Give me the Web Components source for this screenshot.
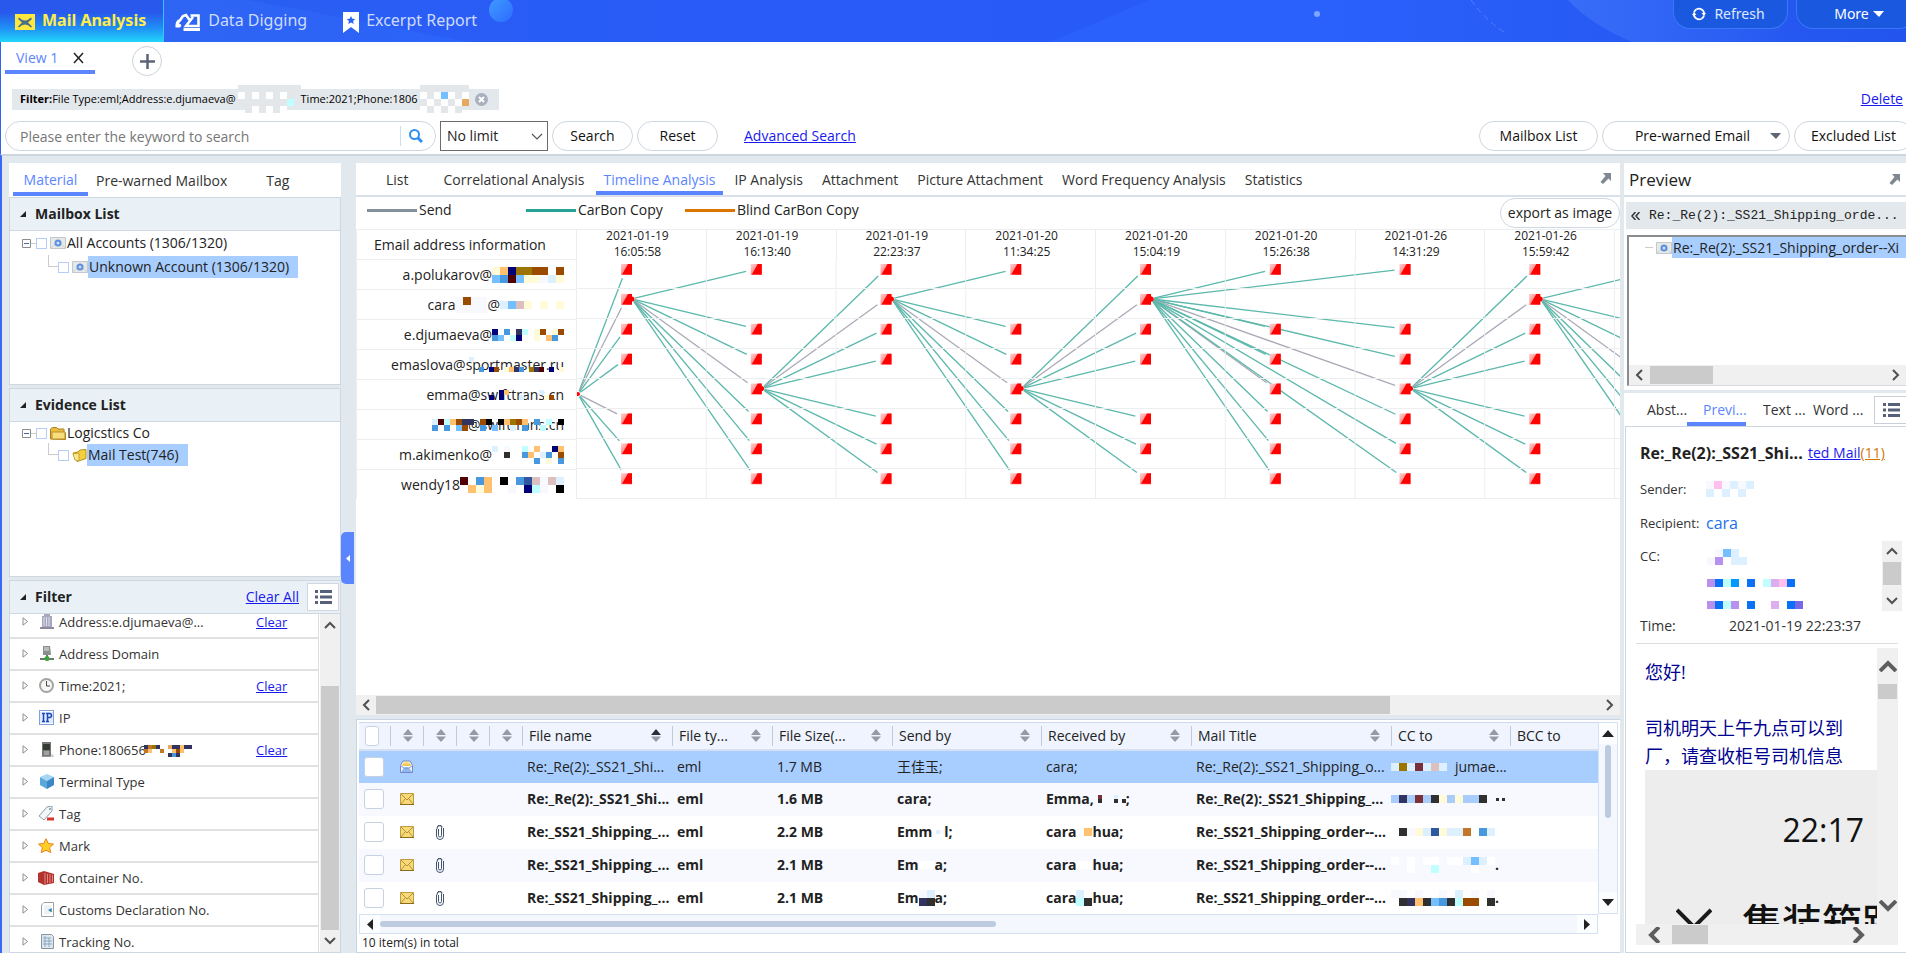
<!DOCTYPE html>
<html lang="en">
<head>
<meta charset="utf-8">
<title>Mail Analysis</title>
<style>
html,body{height:100%}
body{margin:0;font:14px/20px "Open Sans","Noto Sans CJK SC",sans-serif;color:#222;overflow:hidden;background:#fff}
</style>
</head>
<body>
<mail-app></mail-app>
<script>
const ICONS={
envelopeX:[20,16,'<path fill="#ffe83e" d="M0 0h20v16H0z"/><path d="M4 3.500q3 3 6 3t6-3l1 1.500-4 3.500 4 4-1 1q-3-3-6-3t-6 3l-1-1 4-4L3 5z" fill="#4a6f8c"/>'],
digger:[26,18,'<path d="M4.500 8L8 3l3-1 3.500 5" fill="none" stroke="#fff" stroke-width="2.600"/><path d="M3 6.500Q0 9 .5 14.500h4.500q2-1 1-3l-2-1 2-3z" fill="#fff"/><path d="M15.500 2.500h8v10.500H11l7-9" fill="none" stroke="#fff" stroke-width="2.600"/><path d="M8.500 16.500h16.500" stroke="#fff" stroke-width="3"/>'],
bookmark:[16,21,'<path d="M0 0h16v21l-8-6-8 6z" fill="#fff"/><path d="M8 4l1.300 2.700 3 .4-2.200 2 .6 2.900L8 10.600 5.300 12l.6-2.900-2.200-2 3-.4z" fill="#2c62f6"/>'],
refresh:[14,14,'<path d="M4.500 2.300A5.300 5.300 0 0 1 12.200 7M9.500 11.700A5.300 5.300 0 0 1 1.800 7" fill="none" stroke="#fff" stroke-width="1.800"/><path d="M2 5.500Q2.500 3.500 4.500 2.300M12 8.500Q11.500 10.500 9.500 11.700" fill="none" stroke="#fff" stroke-width="1.800"/><path d="M0 8l2-3 2.500 3zM14 6l-2 3-2.500-3z" fill="#fff"/>'],
caret:[11,6,'<path d="M0 0h11L6 6z" fill="currentColor"/>'],
close:[11,12,'<path d="M1 1l9 10M10 1L1 11" stroke="#222" stroke-width="1.500"/>'],
plus:[15,15,'<path d="M7.500 0v15M0 7.500h15" stroke="#5c6577" stroke-width="2.500"/>'],
chipClose:[13,13,'<circle cx="6.500" cy="6.500" r="6.500" fill="#a9b0bd"/><path d="M4 4l5 5M9 4l-5 5" stroke="#fff" stroke-width="2"/>'],
search:[14,14,'<circle cx="5.500" cy="5.500" r="4.500" fill="none" stroke="#2f8ff0" stroke-width="2"/><path d="M9 9l4 4" stroke="#2f8ff0" stroke-width="3"/>'],
chevDown:[12,7,'<path d="M1 1l5 5 5-5" fill="none" stroke="#555" stroke-width="1.200"/>'],
fold:[6,6,'<path d="M6 0v6H0z" fill="#222"/>'],
popout:[11,11,'<path d="M3 0h8v8L8.500 5.500 3 11 .5 9 5.500 3z" fill="#818892"/>'],
list:[17,14,'<path d="M0 1.500h3M0 7h3M0 12.500h3M5 1.500h12M5 7h12M5 12.500h12" stroke="#56607a" stroke-width="3"/>'],
minus:[9,9,'<path d="M.5.5h8v8h-8z" fill="#fff" stroke="#8b8b8b"/><path d="M2 4.500h5" stroke="#4466aa"/>'],
at:[16,12,'<path d="M.5.5h15v11H.5z" fill="#e6e9e6" stroke="#c3c8cc"/><path d="M0 12l6-6M16 12l-6-6" stroke="#d0d4d6"/><circle cx="8" cy="6" r="3.500" fill="#5d8fe0"/><circle cx="8" cy="6" r="1.500" fill="#cfe0fb"/>'],
folder:[16,13,'<path d="M.5 12V2l2-1.500h4L8 2h6v3l1.500 1v6.500z" fill="#e9bd42" stroke="#a87f1d"/><path d="M2 5h13v7H2z" fill="#f8de7a" stroke="#b98f2c"/>'],
folder2:[15,13,'<path d="M1 4l5-1 2-2 6-.5v9l-9 3z" fill="#f5cf3d" stroke="#b3901c"/><path d="M1 5l6-1v8l-4-1z" fill="#fbe793" stroke="#c9a530"/>'],
tri:[6,9,'<path d="M1 .8L5.500 4.500 1 8.200z" fill="#fff" stroke="#8d8d8d"/>'],
building:[14,15,'<path d="M4 0h6v2h2v11H2V2h2z" fill="#a7a7bd"/><path d="M4 3v9M6.500 3v9M9 3v9" stroke="#dfe0ee"/><path d="M0 13h14v2H0z" fill="#8a8a9a"/>'],
server:[14,15,'<path d="M3 0h7l1 9H3z" fill="#8c908c"/><path d="M4 2h5M4 4h5" stroke="#e5e8e5"/><path d="M7 9v3M0 13h14" stroke="#6d7a6d" stroke-width="2"/><circle cx="7" cy="12.500" r="2.500" fill="#3ba33b"/>'],
clock:[15,15,'<circle cx="7.500" cy="7.500" r="6.500" fill="#f6f7f5" stroke="#a0a5a0" stroke-width="2"/><path d="M7.500 3v5H11" fill="none" stroke="#444"/>'],
ip:[15,15,'<rect x=".5" y=".5" width="14" height="14" fill="#fff" stroke="#7fa0dd"/><rect x="1" y="2" width="13" height="11" fill="#dfe9fb"/><path d="M3 3.500h3M3 11.500h3M4.500 3v9M7 3.500h3.500q2 0 2 2t-2 2H9M7 11.500h3M8.500 3v9" fill="none" stroke="#1b49b8" stroke-width="1.500"/>'],
phone:[14,15,'<path d="M2 0h9v15H2z" fill="#777"/><path d="M3 2h7v6H3z" fill="#333c34"/><path d="M4 10h5M4 12h5" stroke="#ccc"/><path d="M11 13h2v2H1" stroke="#bbb" fill="none"/>'],
cube:[14,15,'<path d="M0 3l7-3 7 3-7 4z" fill="#a5d6f5"/><path d="M0 3l7 4v8l-7-4z" fill="#5aa7dc"/><path d="M14 3L7 7v8l7-4z" fill="#3c86c4"/>'],
tag:[16,15,'<path d="M1 10l8-9 5-1v5l-8 9z" fill="#f2f7f9" stroke="#8ba0ac"/><circle cx="12" cy="3" r="1" fill="#7d929e"/><path d="M9 13h7" stroke="#d9352c" stroke-width="3"/>'],
star:[16,15,'<path d="M8 .7l2.300 4.800 5.200.6-3.900 3.500 1.100 5L8 12.200l-4.700 2.400 1.100-5L.5 6.100l5.200-.6z" fill="#ffcf26" stroke="#e8811f"/>'],
container:[16,14,'<path d="M0 2l6-2 10 3v9l-10 2-6-3z" fill="#b3332f"/><path d="M7 2v11M9.500 3v9M12 3v9M14.500 4v7" stroke="#e28a83"/>'],
doc:[13,15,'<path d="M3 .5h9.500v14H.5V3z" fill="#fff" stroke="#9aa1a6"/><path d="M3 3h7v9H3z" fill="#eef2f4"/><path d="M7 8l4-2-1 4z" fill="#2c7bd1"/><path d="M9 9l2-1v2z" fill="#38a53a"/>'],
docBlue:[13,15,'<path d="M.5.500h10l2 2v12H.5z" fill="#dfe7ee" stroke="#8a949c"/><path d="M2 4h8M2 7h9M2 10h9M4 2v11M8 4v9" stroke="#8aa9c4"/>'],
up:[12,8,'<path d="M1 7l5-5 5 5" fill="none" stroke="#505050" stroke-width="2"/>'],
down:[12,8,'<path d="M1 1l5 5 5-5" fill="none" stroke="#505050" stroke-width="2"/>'],
left:[8,12,'<path d="M7 1L2 6l5 5" fill="none" stroke="#505050" stroke-width="2"/>'],
right:[8,12,'<path d="M1 1l5 5-5 5" fill="none" stroke="#505050" stroke-width="2"/>'],
bigUp:[18,12,'<path d="M1 11l8-8 8 8" fill="none" stroke="#5e5e5e" stroke-width="4"/>'],
bigDown:[18,12,'<path d="M1 1l8 8 8-8" fill="none" stroke="#5e5e5e" stroke-width="4"/>'],
bigLeft:[12,16,'<path d="M11 0L3 8l8 8" fill="none" stroke="#5e5e5e" stroke-width="4"/>'],
bigRight:[12,16,'<path d="M1 0l8 8-8 8" fill="none" stroke="#5e5e5e" stroke-width="4"/>'],
sUp:[12,7,'<path d="M0 7l6-7 6 7z" fill="#222"/>'],
sDown:[12,7,'<path d="M0 0h12L6 7z" fill="#222"/>'],
sLeft:[6,11,'<path d="M6 0v11L0 5.500z" fill="#222"/>'],
sRight:[6,11,'<path d="M0 0v11l6-5.500z" fill="#222"/>'],
sort:[10,13,'<path d="M5 0l5 6H0zM5 13l5-5.500H0z" fill="#959ba6"/>'],
sortAsc:[10,13,'<path d="M5 0l5 6H0z" fill="#2a2f3c"/><path d="M5 13l5-5.500H0z" fill="#959ba6"/>'],
openMail:[13,13,'<path d="M.5 5.500L3 1h7l2.500 4.500v7H.5z" fill="#f2f6fd" stroke="#7486c8"/><path d="M3 3.500Q6.500-1 10 3.500l1 2.500H2z" fill="#f3c64c"/><path d="M3.500 3h6" stroke="#fff3c0"/><path d="M1 12l3.500-5h4l3.500 5z" fill="#8fbaf0"/><path d="M1 6l3.500 2.500h4L12 6" fill="none" stroke="#8b9ad2"/>'],
mail:[14,12,'<path d="M.5.500h13v11H.5z" fill="#f6da77" stroke="#c09c42"/><path d="M1 1l6 6 6-6M1 11l4-5M13 11L9 6" fill="none" stroke="#b9913a"/><path d="M0 11.500h14" stroke="#8c6a1c"/>'],
clip:[8,15,'<path d="M2.500 4v6.500a1.500 1.500 0 0 0 3 0V2.500a2 2 0 0 0-4-.5M.5 4v7a3.500 3.500 0 0 0 7 0V3M1 4a3 3 0 0 1 5.500-2" fill="none" stroke="#44546e"/>'],
collapse:[4,7,'<path d="M4 0v7L0 3.500z" fill="#fff"/>'],
bigChev:[36,20,'<path d="M1 2l17 17L35 2" fill="none" stroke="#1a1a1a" stroke-width="4"/>'],
guillemet:[9,8,'<path d="M4.500 0L1 4l3.500 4M8.500 0L5 4l3.500 4" fill="none" stroke="#333" stroke-width="1.500"/>']
};
const ic=(n)=>{const [w,h,p]=ICONS[n];return `<svg class="ic" aria-hidden="true" width="${w}" height="${h}" viewBox="0 0 ${w} ${h}">${p}</svg>`};
const BASE=`*{box-sizing:border-box}svg.ic{display:block;flex:none}button,input,select{font:inherit;color:inherit;margin:0}a{color:#1a1aee}button{cursor:pointer;padding:0;background:none;border:0}`;
function define(name,css,html){
  customElements.define(name,class extends HTMLElement{
    connectedCallback(){
      if(this.shadowRoot)return;
      const r=this.attachShadow({mode:'open'});
      const t=document.createElement('template');
      t.innerHTML=`<style>${BASE}${css}</style>${typeof html==='function'?html(this):html}`;
      r.append(t.content.cloneNode(true));
    }
  });
}

/* Block of coloured pixels laid over private data; one letter per cell, rows split by "/". */
const PAL={k:'#000',K:'#303030',n:'#000078',N:'#33335f',b:'#9b4b00',o:'#ffc070',O:'#e8a860',l:'#73bfff',L:'#dcf0ff',c:'#bfffff',y:'#fffbd8',s:'#4898df',t:'#9b7500',m:'#500000',M:'#7a3038',p:'#ffc0f0',v:'#b890ee',B:'#0a70f5',u:'#dcaeee',g:'#e3e7ea',w:'#ffffff',W:'#f7f9ff',r:'#dcc0c0',q:'#c07828',d:'#3058a0',i:'#7868e8',S:'#009aff',a:'#a8cdfd'};
define('pixel-mosaic',`:host{display:block;flex:none}svg{display:block}`,el=>{
  const s=+(el.getAttribute('size')||8),rows=el.getAttribute('cells').split('/');
  const w=rows[0].length*s,h=rows.length*s;let p='';
  rows.forEach((r,y)=>[...r].forEach((ch,x)=>{if(PAL[ch])p+=`<rect x="${x*s}" y="${y*s}" width="${s}" height="${s}" fill="${PAL[ch]}"/>`}));
  return `<svg width="${w}" height="${h}" aria-hidden="true">${p}</svg>`;
});

define('scroll-bar',`:host{display:flex;background:#f0f0f0;flex:none}
:host([vertical]){flex-direction:column}
.arrow{display:flex;align-items:center;justify-content:center;flex:none;width:var(--arrow,20px)}
:host([vertical]) .arrow{width:auto;height:var(--arrow,20px)}
.track{flex:1;display:flex;min-width:0;min-height:0;align-items:stretch}
:host([vertical]) .track{flex-direction:column}
.thumb{background:#cbcbcb;margin:1px 0}
:host([vertical]) .thumb{margin:0 1px}
:host([soft]){background:#f4f8fe;border:1px solid #d5e2f3}
:host([soft]) .arrow{background:#fbfdff}
:host([soft]) .thumb{background:#bccbe0;border-radius:3px;margin:6px 0}
:host([soft][vertical]) .thumb{margin:0 6px}`,el=>{
  const v=el.hasAttribute('vertical'),[a,b,c]=el.getAttribute('parts').split(' ');
  const k=el.hasAttribute('soft')?['sUp','sDown','sLeft','sRight']:el.hasAttribute('big')?['bigUp','bigDown','bigLeft','bigRight']:['up','down','left','right'];
  return `<span class="arrow">${ic(v?k[0]:k[2])}</span><span class="track"><span style="flex:${a}"></span><span class="thumb" style="flex:${b}"></span><span style="flex:${c}"></span></span><span class="arrow">${ic(v?k[1]:k[3])}</span>`;
});

define('app-header',`:host{display:flex;position:relative;height:42px;flex:none;background:linear-gradient(90deg,#2f66f0,#2b62fb 30%,#2a60fb 70%,#2354ee);color:#cfdcff;font-family:"Noto Sans",sans-serif;font-size:16px;overflow:hidden}
.deco{position:absolute;inset:0;width:100%;height:100%}
nav{display:flex;position:relative;flex:1}
nav a{display:flex;align-items:center;gap:7px;text-decoration:none;color:#cfdbff;padding:0 36px 2px 0;height:42px}
nav a.on{background:linear-gradient(180deg,#2859ec 30%,#1f8cf5 65%,#22d6fb);color:#ffee4a;font-weight:bold;padding:0 17px 2px 15px;margin-right:11px;border-right:1px solid #35c8f8}
nav a svg{position:relative;top:2px}
.right{display:flex;gap:8px;position:relative;font-size:14px;margin-right:-10px}
.right button{height:29px;border:1px solid #3a78f5;border-top:0;border-radius:0 0 17px 17px;background:#1b58e0;color:#dfe8ff;display:flex;align-items:center;justify-content:center;gap:8px}
.right button:first-child{width:115px;padding-right:4px}.right button:last-child{width:120px;gap:4px;padding-left:6px;color:#fff}`,
`<svg class="deco" preserveAspectRatio="none" viewBox="0 0 1906 42" aria-hidden="true"><defs><linearGradient id="g" x1="0" y1="0" x2="1" y2="1"><stop offset="0" stop-color="#3f9bff"/><stop offset="1" stop-color="#2d6bff"/></linearGradient><linearGradient id="h"><stop offset="0" stop-color="#4378f8"/><stop offset="1" stop-color="#4378f8" stop-opacity="0"/></linearGradient></defs>
<path d="M250 0h900l-100 42H470z" fill="#1f4cec" opacity=".25"/><circle cx="501" cy="10" r="12" fill="url(#g)"/><circle cx="1317" cy="14" r="3" fill="#7ea5ff"/><path d="M1471 0q14 20 36 34" fill="none" stroke="#4f80ff" stroke-dasharray="6 4"/><path d="M1568 0q22 24 64 42h180L1780 0z" fill="url(#h)" opacity=".6"/></svg>
<nav><a class="on" href="#mail">${ic('envelopeX')}Mail Analysis</a><a href="#dig">${ic('digger')}Data Digging</a><a href="#report">${ic('bookmark')}Excerpt Report</a></nav>
<div class="right"><button>${ic('refresh')}Refresh</button><button>More ${ic('caret')}</button></div>`);

define('view-bar',`:host{display:flex;align-items:flex-start;height:46px;padding:4px 0 0 5px;flex:none}
.tab{display:flex;align-items:center;gap:15px;width:90px;height:28px;padding-left:11px;border-bottom:4px solid #5b85ff;color:#5b85ff;white-space:nowrap}
.add{width:30px;height:30px;margin-left:37px;border:1px solid #ccd2dc;border-radius:15px;display:flex;align-items:center;justify-content:center}`,
`<div class="tab">View 1<button aria-label="Close view">${ic('close')}</button></div><button class="add" aria-label="Add view">${ic('plus')}</button>`);

define('filter-bar',`:host{display:flex;align-items:center;justify-content:space-between;height:22px;padding:0 3px 0 12px;flex:none}
.chip{display:flex;align-items:center;height:21px;padding:0 11px 0 8px;background:#e3e8ec;font-size:11px;color:#000}
.chip pixel-mosaic{margin:-6px 0 -6px 2px}.chip button{margin-left:6px}`,
`<div class="chip"><b>Filter:</b>File Type:eml;Address:e.djumaeva@<pixel-mosaic size="7" cells="ggggggggg/wgwgwgwg/gggggggc/.gwgwgw."></pixel-mosaic>Time:2021;Phone:1806<pixel-mosaic size="7" cells="ggggggg/wgwlwgw/gwgwgwO/wgwgwg."></pixel-mosaic><button aria-label="Remove filter">${ic('chipClose')}</button></div><a href="#delete">Delete</a>`);

define('search-bar',`:host{display:flex;align-items:center;height:44px;padding:8px 0 0 5px;flex:none;overflow:hidden}
.box{display:flex;align-items:center;width:431px;height:30px;border:1px solid #cfd6e0;border-radius:15px;background:#fff}
.box input{flex:1;min-width:0;border:0;outline:0;background:none;padding:0 14px;height:28px}
.box input::placeholder{color:#777}
.box button{height:20px;width:35px;border-left:1px solid #c7e0f8;display:flex;align-items:center;padding-left:8px}
.sel{display:grid;width:108px;height:30px;margin:0 4px}
.sel>*{grid-area:1/1}.sel select{appearance:none;border:1px solid #6c6c6c;background:#fff;padding:0 6px}.sel svg{justify-self:end;align-self:center;margin-right:5px;pointer-events:none}
.pill{height:30px;border:1px solid #cfd6e0;border-radius:15px;background:#fff;margin-right:4px;display:flex;align-items:center;justify-content:center;color:#111}
.sm{width:81px}.md{width:119px}.lg{width:188px;gap:20px;padding-left:24px;color:#111}.lg svg{color:#5d6672}
.adv{margin-left:22px;flex:1}.end{margin-right:-7px}`,
`<div class="box"><input aria-label="Keyword" placeholder="Please enter the keyword to search"><button aria-label="Search keyword">${ic('search')}</button></div>
<label class="sel"><select aria-label="Limit"><option>No limit</option></select>${ic('chevDown')}</label>
<button class="pill sm">Search</button><button class="pill sm">Reset</button><a class="adv" href="#advanced">Advanced Search</a>
<button class="pill md">Mailbox List</button><button class="pill lg">Pre-warned Email${ic('caret')}</button><button class="pill md end">Excluded List</button>`);

define('side-panel',`:host{display:block;background:#fff;border:1px solid #cfd8e2;overflow:hidden}
header{display:flex;align-items:center;gap:9px;height:33px;padding:0 1px 0 10px;background:#e9f1f7;border-bottom:1px solid #cfd8e2;font-weight:bold}
header h2{font-size:14px;margin:0;flex:1}header ::slotted(*){font-weight:normal}`,
el=>`<header>${ic('fold')}<h2>${el.getAttribute('label')}</h2><slot name="tools"></slot></header><slot></slot>`);

define('tree-row',`:host{display:flex;align-items:center;height:24px;padding-left:12px;white-space:nowrap}
:host([child]){padding-left:38px}
.line{width:10px;height:12px;border-left:1px solid #ccc;border-bottom:1px solid #ccc;margin-bottom:12px}
.dash{width:5px;border-top:1px solid #ccc}
input{appearance:none;width:11px;height:11px;border:1px solid #b5cdf7;background:#fff;margin-right:3px}
label{display:flex;align-items:center}
.txt{padding:0 3px 0 1px;line-height:22px}
:host([child]) .txt{background:#a8ceff;padding-right:9px}`,
el=>`${el.hasAttribute('child')?'<span class="line"></span>':ic('minus')+'<span class="dash"></span>'}<label><input type="checkbox">${ic(el.getAttribute('icon'))}<span class="txt"><slot></slot></span></label>`);

define('filter-list',`:host{display:flex;height:calc(100% - 33px);overflow:hidden}
ul{list-style:none;margin:-7px 0 0;padding:0;flex:1;font-size:13px;color:#333}
li{display:flex;align-items:center;height:32px;border-bottom:2px solid #dfe1e3;border-right:1px solid #dcdfe2;padding-left:12px}
.i{width:31px;display:flex;justify-content:flex-end;padding-right:5px}
.n{flex:1;display:flex;align-items:center;white-space:nowrap}.n pixel-mosaic{margin:2px 0 0 -2px}
li a{width:62px}
scroll-bar{width:20px;--arrow:22px;margin-left:1px}`,()=>{
  const rows=[['building','Address:e.djumaeva@...',1],['server','Address Domain'],['clock','Time:2021;',1],['ip','IP'],['phone','Phone:180656<pixel-mosaic size="4" cells="NqtN..ONNoNN/qow.qw.obo../......NsN..."></pixel-mosaic>',1],['cube','Terminal Type'],['tag','Tag'],['star','Mark'],['container','Container No.'],['doc','Customs Declaration No.'],['docBlue','Tracking No.']];
  return `<ul>${rows.map(([i,n,c])=>`<li>${ic('tri')}<span class="i">${ic(i)}</span><span class="n">${n}</span>${c?'<a href="#clear">Clear</a>':''}</li>`).join('')}</ul><scroll-bar vertical parts="51 248 0"></scroll-bar>`;
});

define('left-pane',`:host{display:flex;flex-direction:column;gap:3px;min-height:0}
nav{display:flex;align-items:flex-end;height:34px;background:#fff;margin-bottom:-3px;padding-left:4px;flex:none}
nav a{color:#333;text-decoration:none;height:26px;text-align:center}
nav a.on{width:75px;color:#5b85ff;border-bottom:4px solid #5b85ff;margin-bottom:1px}
nav a.b{padding:0 8px;margin-right:31px}
side-panel{flex:188 1 0;min-height:0}.f{flex:375 1 0}
.ev tree-row{height:22px}
.t{display:flex;align-items:center;gap:8px}
.t button{width:32px;height:28px;border:1px solid #cfd8e2;background:#fff;display:flex;align-items:center;justify-content:center}`,
`<nav><a class="on" href="#material">Material</a><a class="b" href="#prewarned">Pre-warned Mailbox</a><a href="#tag">Tag</a></nav>
<side-panel label="Mailbox List"><tree-row icon="at">All Accounts (1306/1320)</tree-row><tree-row child icon="at">Unknown Account (1306/1320)</tree-row></side-panel>
<side-panel class="ev" label="Evidence List"><tree-row icon="folder">Logicstics Co</tree-row><tree-row child icon="folder2">Mail Test(746)</tree-row></side-panel>
<side-panel class="f" label="Filter"><div class="t" slot="tools"><a href="#clear-all">Clear All</a><button aria-label="List options">${ic('list')}</button></div><filter-list></filter-list></side-panel>`);

define('timeline-chart',`:host{display:grid;grid-template-columns:221px 1fr;flex:none;height:270px;grid-template-rows:30px 240px;font-size:14px;color:#222;overflow:hidden}
.corner,.dates,.names{border-top:1px solid #eceef0}
.corner,.names{border-left:1px solid #eceef0;border-right:1px solid #eceef0}
.corner{display:flex;align-items:center;padding-left:17px}
.dates{display:grid;grid-template-columns:repeat(8,1fr);padding-right:5px;font-size:12px;line-height:16px}
.dates div{text-align:center;padding-right:8px;border-right:1px solid #eceef0;height:32px;margin-top:-2px}
.names div{display:flex;align-items:center;justify-content:flex-end;height:30px;padding-right:12px;border-bottom:1px solid #eceef0;white-space:nowrap}
.over{display:grid;justify-items:end;align-items:center}.over>*{grid-area:1/1}
svg{width:100%;height:240px;display:block}`,()=>{
  const P=129.75,X=49,ny=r=>10+30*r-r*.1,nx=c=>X+P*(c-1);
  const nodes={1:[0,1,2,3,5,6,7],2:[0,2,3,4,5,6,7],3:[0,1,2,3,5,6,7],4:[0,2,3,4,5,6,7],5:[0,1,2,3,5,6,7],6:[0,2,3,4,5,6,7],7:[0,2,3,4,5,6,7],8:[0,1,2,3,5,6,7]};
  const fans=[[1,1,2,4],[2,4,3,1],[3,1,4,4],[4,4,5,1],[5,1,6,4],[5,1,7,4],[7,4,8,1],[8,1,9,4]];
  let s='';
  const edge=(x1,y1,c,r,grey,st=3)=>{const x2=nx(c),y2=ny(r),dx=x2-x1,dy=y2-y1,l=Math.hypot(dx,dy),ux=dx/l,uy=dy/l;
    s+=`<path d="M${x1+ux*st} ${y1+uy*st}L${x2-ux*10} ${y2-uy*10}" stroke="${grey?'#a9aab6':'#5cb8ab'}" stroke-width="1.300"/>`};
  nodes[1].forEach(r=>edge(1,135,1,r,r==1||r==5));
  fans.forEach(([c,r,c2,g])=>{(nodes[c2]||[0,2,3,4,5,6,7]).forEach(t=>edge(nx(c)+6,ny(r),c2,t,t==g))});
  let grid='';
  for(let i=1;i<9;i++){grid+=`<path d="M0 ${i*30-.5}H1043M${i*P-.5} 0V240"/>`}
  let n='';
  for(const c in nodes)for(const r of nodes[c]){const x=nx(c),y=ny(r);n+=`<rect x="${x-5}" y="${y-5}" width="11" height="11" fill="url(#nd)"/><path d="M${x-4} ${y+5.500}L${x+2} ${y-5}h4v10.500z" fill="#f00"/>`}
  fans.forEach(([c,r])=>n+=`<circle cx="${nx(c)+6}" cy="${ny(r)}" r="2.500" fill="#f00"/>`);
  const D=['2021-01-19 16:05:58','2021-01-19 16:13:40','2021-01-19 22:23:37','2021-01-20 11:34:25','2021-01-20 15:04:19','2021-01-20 15:26:38','2021-01-26 14:31:29','2021-01-26 15:59:42'];
  return `<div class="corner">Email address information</div><div class="dates">${D.map(d=>`<div>${d.replace(' ','<br>')}</div>`).join('')}</div>
  <div class="names"><div>a.polukarov@<pixel-mosaic cells="yonttbbwb/lsmlyyWLy"></pixel-mosaic></div>
  <div>cara<pixel-mosaic cells="WbWW/WWWW"></pixel-mosaic>@<pixel-mosaic cells="Llrywywy"></pixel-mosaic></div>
  <div>e.djumaeva@<pixel-mosaic size="6" cells="n.s.Nc.yb.yb/sl.cn..y.os."></pixel-mosaic></div>
  <div><span class="over"><span>emaslova@sportmaster.ru</span><pixel-mosaic size="5" cells="L................../......................../..s.nb.yoNs.tNm.n.y"></pixel-mosaic></span></div>
  <div><span class="over"><span>emma@swifttrans.cn</span><pixel-mosaic size="5" cells="....no......L..../..n.n...L....yb."></pixel-mosaic></span></div>
  <div><pixel-mosaic size="6" cells="LmcobN/s.s.lb"></pixel-mosaic><span class="over"><span>@swifttrans.cn</span><pixel-mosaic size="6" cells="N.bk.kotbo.s.c.k/..s.l..L.s..c..."></pixel-mosaic></span></div>
  <div>m.akimenko@<pixel-mosaic size="6" cells="L.W..c.o..no/..K..so.Ls.b/.......s.y.s"></pixel-mosaic></div>
  <div>wendy18<pixel-mosaic cells="mwsowkwsdrWrL/.oyow.WwncW.k"></pixel-mosaic></div></div>
  <svg viewBox="0 0 1043 240" preserveAspectRatio="none" role="img" aria-label="Mail timeline"><defs><linearGradient id="nd" x1="0" y1="0" x2="1" y2="1"><stop offset="0" stop-color="#ffd0d0"/><stop offset="1" stop-color="#ff5050"/></linearGradient></defs>
  <g fill="none">${s}</g><g stroke="#eceef0">${grid}</g>${n}<circle cx="1" cy="135" r="2" fill="#f00"/></svg>`;
});

define('analysis-pane',`:host{display:flex;flex-direction:column;background:#fff;min-height:0;flex:1;overflow:hidden}
nav{display:flex;align-items:flex-end;height:34px;border-bottom:2px solid #d9e0e9;padding:0 19px 0 30px;flex:none}
nav a{color:#333;text-decoration:none;height:25px;white-space:nowrap;margin-right:19px}
nav a.on{color:#5b85ff;border-bottom:4px solid #5b85ff;padding:0 8px;margin:0 11px 0 -8px}
nav a.l{margin-right:35px}nav .sp{flex:1}nav button{margin-bottom:11px;margin-right:-10px}
.legend{display:flex;align-items:center;height:32px;padding-left:11px;flex:none}
.k{display:flex;align-items:center;gap:2px;width:159px;white-space:nowrap;padding-bottom:6px}
.k i{width:50px;height:3px;background:var(--c)}
.legend .k.w{width:175px}
.legend button{height:30px;width:120px;border:1px solid #cfd6e4;border-radius:15px;background:#fff;margin-left:auto}
.blank{flex:1}scroll-bar{height:20px}`,
`<nav><a class="l" href="#list">List</a><a href="#corr">Correlational Analysis</a><a class="on" href="#timeline">Timeline Analysis</a><a href="#ip">IP Analysis</a><a href="#att">Attachment</a><a href="#pic">Picture Attachment</a><a href="#word">Word Frequency Analysis</a><a href="#stat">Statistics</a><span class="sp"></span><button aria-label="Pop out">${ic('popout')}</button></nav>
<div class="legend"><span class="k" style="--c:#84909b"><i></i>Send</span><span class="k" style="--c:#26a393"><i></i>CarBon Copy</span><span class="k w" style="--c:#dc7400"><i></i>Blind CarBon Copy</span><button>export as image</button></div>
<timeline-chart></timeline-chart><div class="blank"></div><scroll-bar parts="0 1012 210"></scroll-bar>`);

define('mail-grid',`:host{display:grid;grid-template-columns:1fr 20px;grid-template-rows:192px 20px 18px;background:#fff;border:1px solid #c9d5e3;border-right:0;padding:2px 2px 0;flex:none;overflow:hidden}
.wrap{overflow:hidden}
table{border-collapse:collapse;table-layout:fixed;width:100%;color:#222}
th{height:27px;padding:0;background:#eff4fe;border-top:1px solid #cddaee;border-bottom:2px solid #d5e0f0;text-align:left;font-weight:normal}
.h{display:flex;align-items:center;justify-content:space-between;height:20px;border-left:1px solid #c3cad5;padding:0 11px 0 6px;white-space:nowrap}
th:first-child .h{border:0}.h.c{padding-right:10px;justify-content:flex-end}
td{height:33px;padding:0 0 0 5px;white-space:nowrap;font-weight:bold;line-height:20px}
tr.sel td{background:#a8ceff;font-weight:normal}
tr.alt td{background:#f7f9ff}
input{appearance:none;width:20px;height:20px;border:1px solid #c6d2e2;border-radius:3px;background:#fff;display:block}
.f{display:flex;align-items:center}
.f.cc{margin-left:-5px}
td .ic{margin:0 auto}td.i{padding:0}
.foot{grid-column:1/3;font-size:12px;line-height:18px;padding-left:3px}
scroll-bar[vertical]{--arrow:21px}`,()=>{
  const cols=[31,33,33,33,33,150,100,120,149,150,200,119,0];
  const hd=['File name','File ty...','File Size(...','Send by','Received by','Mail Title','CC to','BCC to'];
  const m=(c,s)=>`<pixel-mosaic${s?` size="${s}"`:''} cells="${c}"></pixel-mosaic>`;
  const R=[['Re:_Re(2):_SS21_Shi...','1.7 MB','王佳玉;','cara;','Re:_Re(2):_SS21_Shipping_o...',m('LtLMLrLa')+'jumae...'],
  ['Re:_Re(2):_SS21_Shi...','1.6 MB','cara;','Emma,'+m('.M...L../.K.W.K.K',4)+';','Re:_Re(2):_SS21_Shipping_...',m('aNaMaKyayaaK')+m('...K.K',3)],
  ['Re:_SS21_Shipping_...','2.2 MB','Emm'+m('wLW',4)+'l;','cara'+m('wo')+'hua;','Re:_SS21_Shipping_order--...',m('wKWyLdyLLqwsL')],
  ['Re:_SS21_Shipping_...','2.1 MB','Em'+m('ww')+'a;','cara'+m('ww')+'hua;','Re:_SS21_Shipping_order--...',m('wWwWwwWwwLlLw/..w..c.W..w..')+'.'],
  ['Re:_SS21_Shipping_...','2.1 MB','Em'+m('WL/NK')+'a;','cara'+m('Lw/cK')+'hua;','Re:_SS21_Shipping_order--...',m('WWwWwwWwLwWwW/.KNoKlsKcbbwK')+'.']];
  return `<div class="wrap"><table><colgroup>${cols.map(w=>`<col${w?` style="width:${w}px"`:''}>`).join('')}</colgroup><thead><tr><th><div class="h"><input type="checkbox" aria-label="Select all"></div></th>${`<th><div class="h c">${ic('sort')}</div></th>`.repeat(4)}${hd.map((h,i)=>`<th><div class="h">${h}${i==7?'':ic(i?'sort':'sortAsc')}</div></th>`).join('')}</tr></thead><tbody>${R.map((r,i)=>`<tr class="${i?i%2?'alt':'':'sel'}"><td><input type="checkbox" aria-label="Select row"></td><td class="i">${ic(i?'mail':'openMail')}</td><td class="i">${i>1?ic('clip'):''}</td><td></td><td></td><td>${r[0]}</td><td>eml</td><td>${r[1]}</td>${r.slice(2).map((c,j)=>`<td><div class="f${j==3?' cc':''}">${c}</div></td>`).join('')}<td></td></tr>`).join('')}</tbody></table></div>
  <scroll-bar soft vertical parts="1 75 76"></scroll-bar><scroll-bar soft parts="0 617 581"></scroll-bar><span></span><div class="foot">10 item(s) in total</div>`;
});

define('preview-pane',`:host{display:flex;flex-direction:column;background:#fff;min-width:0;min-height:0;overflow:hidden}
.head{display:flex;align-items:center;height:34px;padding:2px 6px 0 5px;border-bottom:2px solid #d9e0e9;font-size:16px;flex:none}
.head h2{font-size:17px;font-weight:normal;margin:0;flex:1;line-height:24px}
.head button{margin-bottom:2px}
.crumb{display:flex;align-items:center;gap:9px;height:27px;margin:5px 0 6px 2px;padding-left:5px;background:#e3e8ec;font:13px/20px "Liberation Mono",monospace;white-space:nowrap;flex:none;overflow:hidden}
.tree{display:flex;flex-direction:column;height:151px;margin-left:3px;border:2px solid #8a8d90;border-right:0;border-bottom:1px solid #d6dae0;flex:none;overflow:hidden}
.node{display:flex;align-items:center;height:21px;padding-left:16px;white-space:nowrap;flex:none}
.node i{width:8px;border-top:1px solid #ccc;margin-right:3px;flex:none}
.node span{background:#a8ceff;line-height:21px;flex:1;padding-left:1px}
.tree scroll-bar{height:20px;margin-top:auto;width:100%}
.tabs{display:flex;align-items:center;height:36px;border-top:3px solid #e1e8ee;margin-top:4px;padding-left:14px;flex:none}
.tabs a{color:#333;text-decoration:none;height:28px;line-height:24px;white-space:nowrap;width:49px;padding-left:9px;margin-top:4px}
.tabs a.on{color:#5b85ff;border-bottom:4px solid #5b85ff;width:59px;padding-left:16px;margin-right:9px}
.tabs a.x{width:50px;padding-left:8px}
.tabs button{width:40px;height:28px;border:1px solid #c9ced8;display:flex;align-items:center;padding-left:8px;margin-left:auto;margin-right:-8px;flex:none}
.mail{display:flex;flex-direction:column;flex:1;min-height:0;border:1px solid #ccd5e0;border-right:0;padding:6px 8px 7px 10px;margin-left:1px}
.row{display:flex;align-items:center;font-size:13px;padding-left:4px;flex:none;color:#333}
.row .n{width:66px;flex:none}
.title{height:40px;white-space:nowrap}.title h3{font-size:16px;margin:0;width:164px;color:#222}
.title div{display:flex;justify-content:flex-end;font-size:14px;margin-left:4px}.title a+a{color:#d07800}
.from{height:32px}.to{height:36px}
.who{color:#1a70ee;font-size:16px;text-decoration:none}
.cc{height:70px;align-items:stretch}.cc .n{padding-top:5px}.cc .l{flex:1;display:flex;flex-direction:column;gap:14px;padding:8px 0 0 1px;overflow:hidden}.cc scroll-bar{width:20px;margin-right:-4px}
.time{height:30px;font-size:14px}.time .n{width:89px}
.frame{flex:1;min-height:0;display:grid;grid-template-columns:1fr 21px;grid-template-rows:1fr 21px;border-top:1px solid #dcdfe2;margin-top:2px;padding-top:4px}
.body{overflow:hidden;padding:10px 0 0 9px;color:#000090;font-size:18px;line-height:28px;min-height:0}
.body p{margin:0 0 28px}.body p+p{margin:0}
.shot{background:#ededed;color:#111;height:180px;overflow:hidden}
.shot time{display:block;text-align:right;font-size:32px;line-height:40px;padding:40px 13px 51px 0}
.shot div{display:flex;align-items:flex-start;gap:30px;padding-left:31px;white-space:nowrap}.shot b{font:500 40px/40px "Noto Sans CJK SC",sans-serif}.shot svg{margin-top:7px}
.frame>scroll-bar{--arrow:36px}
.frame>i{background:#f0f0f0}`,
`<div class="head"><h2>Preview</h2><button aria-label="Pop out">${ic('popout')}</button></div>
<div class="crumb">${ic('guillemet')}<span>Re:_Re(2):_SS21_Shipping_orde...</span></div>
<div class="tree"><div class="node"><i></i>${ic('at')}<span>Re:_Re(2):_SS21_Shipping_order--Xi</span></div><scroll-bar parts="1 63 174"></scroll-bar></div>
<div class="tabs"><a href="#abs">Abst...</a><a class="on" href="#prev">Previ...</a><a class="x" href="#text">Text ...</a><a class="x" href="#word">Word ...</a><button aria-label="List options">${ic('list')}</button></div>
<div class="mail">
<div class="row title"><h3>Re:_Re(2):_SS21_Shi...</h3><div><a href="#related">ted Mail</a><a href="#related">(11)</a></div></div>
<div class="row from"><span class="n">Sender:</span><pixel-mosaic cells="WpWLWL/LwLwLw"></pixel-mosaic></div>
<div class="row to"><span class="n">Recipient:</span><a class="who" href="#cara">cara</a></div>
<div class="row cc"><span class="n">CC:</span><div class="l"><pixel-mosaic cells=".WlLw/WvwLL"></pixel-mosaic><pixel-mosaic cells="vBcS.B.cupB"></pixel-mosaic><pixel-mosaic cells="vBcv.B..u.Bi"></pixel-mosaic></div><scroll-bar vertical parts="1 21 5"></scroll-bar></div>
<div class="row time"><span class="n">Time:</span><span>2021-01-19 22:23:37</span></div>
<div class="frame"><div class="body"><p>您好!</p><p>司机明天上午九点可以到厂，请查收柜号司机信息</p><div class="shot"><time>22:17</time><div>${ic('bigChev')}<b>集装箱跟</b></div></div></div>
<scroll-bar big vertical parts="0 15 188"></scroll-bar><scroll-bar big parts="0 32 119"></scroll-bar><i></i></div>
</div>`);

define('mail-app',`:host{display:flex;flex-direction:column;height:100vh}
.tools{display:flex;flex-direction:column;border-left:1px solid #2f66f0}
.tools>*{margin-left:-1px}
main{flex:1;min-height:0;display:grid;grid-template-columns:332px 15px minmax(0,1fr) 282px;background:#e1e8ee;border-top:2px solid #cdd6df;border-left:2px solid #3a6af5;padding:7px 0 0 7px}
.grip{width:13px;height:52px;border-radius:5px 0 0 5px;background:#5b85ff;display:flex;align-items:center;justify-content:center;align-self:center}
.mid{display:flex;flex-direction:column;gap:4px;min-height:0;margin-right:4px}`,
`<app-header></app-header><div class="tools"><view-bar></view-bar><filter-bar></filter-bar><search-bar></search-bar></div>
<main><left-pane></left-pane><button class="grip" aria-label="Collapse panel">${ic('collapse')}</button><div class="mid"><analysis-pane></analysis-pane><mail-grid></mail-grid></div><preview-pane></preview-pane></main>`);
</script>
</body>
</html>
